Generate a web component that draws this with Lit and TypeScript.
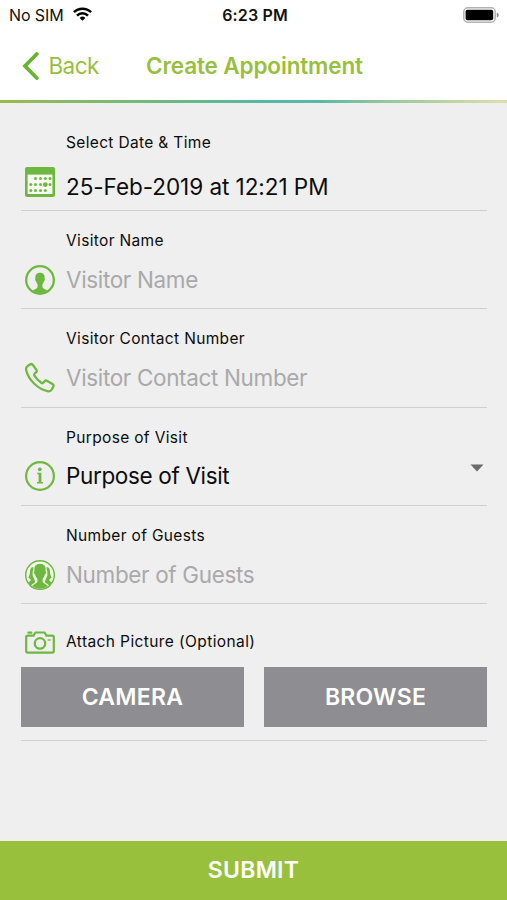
import { LitElement, html, css, svg } from "lit";
import { customElement, property } from "lit/decorators.js";

const icons: Record<string, unknown> = {
  calendar: svg`
    <rect x="0" y="0" width="30" height="30" rx="2" fill="#6fb83f"/>
    <rect x="2.6" y="7.6" width="24.8" height="19.4" fill="#f6faf3"/>
    <g fill="#6fb83f">
      ${[10.5, 15.5, 20.3, 25].map((x) => svg`<circle cx=${x} cy="11.6" r="1.5"/>`)}
      ${[5.8, 10.5, 15.5, 25].map((x) => svg`<circle cx=${x} cy="17.6" r="1.5"/>`)}
      <circle cx="20.3" cy="17.6" r="2.4"/>
      ${[5.8, 10.5, 15.5, 20.3].map((x) => svg`<circle cx=${x} cy="23.6" r="1.5"/>`)}
    </g>`,
  person: svg`
    <circle cx="15" cy="15" r="13.8" fill="none" stroke="#6fb83f" stroke-width="2.3"/>
    <path fill="#6fb83f" d="M15 7.800c-3.400 0-4.900 2.100-4.600 5.400-.7.5-.2 2.600.6 3.100.4 1.300.9 2.200 1.500 2.800v3.300c-1.200 1.500-3.500 1.900-5.300 3.300 2.100 1.900 4.800 2.900 7.800 2.900s5.700-1 7.800-2.900c-1.800-1.400-4.100-1.800-5.300-3.300v-3.300c.6-.6 1.100-1.500 1.500-2.800.8-.5 1.300-2.600.6-3.100.3-3.300-1.200-5.400-4.600-5.400z"/>`,
  phone: svg`
    <path fill="none" stroke="#6fb83f" stroke-width="2.300" stroke-linejoin="round"
      d="M2.300 3.300 5 1.500C6.100.8 7.200 1 7.900 2l3.400 4.600c.7 1 .5 2-.3 2.700L9.700 10.500c-.7.6-.8 1.300-.3 2.100 1.900 2.900 4 5.200 6.900 7.200.9.600 1.600.5 2.200-.2l1.100-1.300c.7-.8 1.700-1 2.700-.4l5.200 3.200c1.100.7 1.400 1.700.8 2.700l-1.700 3c-.7 1.200-1.900 1.700-3.300 1.500C13.200 26.500 3.500 17 1.200 7.200.8 5.500 1.100 4.200 2.300 3.300z"/>`,
  info: svg`
    <circle cx="15" cy="15" r="13.900" fill="none" stroke="#6fb83f" stroke-width="2.200"/>
    <circle cx="14.800" cy="8.300" r="1.900" fill="#6fb83f"/>
    <path fill="#6fb83f" d="M12.200 11.800h4.200v9.300h1.600v1.500h-6v-1.500h1.600v-7.800h-1.400z"/>`,
  group: svg`
    <circle cx="15" cy="15" r="14.300" fill="#f1f7ec" stroke="#6fb83f" stroke-width="1.400"/>
    <g fill="#6fb83f">
      <path d="M9.700 7C6.600 6.500 4.900 8.600 5 11.700c0 2.100-.6 3.700-1.500 5.500.4 1.200 1.800 1.300 2.100 2.200.3 1.100-.6 2.200-2.600 2.900 1.400 2.700 3.600 4.800 6.400 6.100L11 25l-1-4-2.500-6z"/>
      <path d="M20.300 7c3.100-.5 4.800 1.600 4.700 4.700 0 2.100.6 3.700 1.500 5.500-.4 1.200-1.800 1.300-2.100 2.200-.3 1.100.6 2.200 2.600 2.900-1.400 2.700-3.600 4.800-6.400 6.100L19 25l1-4 2.500-6z"/>
      <path stroke="#f1f7ec" stroke-width="1.300" d="M15 3.200c-4.800 0-6.600 2.900-6.200 7.400-1.100.7-.5 3.700.8 4.500.4 1.800 1.100 3.100 2.100 4v2.600c-1.100 1.800-3.900 2.300-5.300 4.200 2.300 2.200 5.200 3.500 8.600 3.500s6.300-1.300 8.600-3.500c-1.400-1.900-4.200-2.400-5.300-4.200v-2.600c1-.9 1.700-2.200 2.100-4 1.300-.8 1.900-3.800.8-4.500.4-4.500-1.400-7.400-6.200-7.400z"/>
    </g>
    <path fill="none" stroke="#6fb83f" stroke-width="1.500" d="M5 25.200a14.300 14.300 0 0 0 20 0"/>`,
  camera: svg`
    <path fill="none" stroke="#6fb83f" stroke-width="2.200" stroke-linejoin="round"
      d="M2.700 4.600h5.800l1.900-3.100h9.200l1.900 3.100h5.800c.9 0 1.500.6 1.500 1.500v14c0 .9-.6 1.500-1.500 1.500H2.700c-.9 0-1.500-.6-1.500-1.500v-14c0-.9.600-1.500 1.500-1.500z"/>
    <rect x="2.400" y=".6" width="5" height="2.200" rx=".8" fill="#6fb83f"/>
    <circle cx="15" cy="12.400" r="5.200" fill="none" stroke="#6fb83f" stroke-width="2.300"/>
    <path stroke="#6fb83f" stroke-width="2" d="M22.600 9h3.200" opacity=".65"/>`,
};

@customElement("form-field")
export class FormField extends LitElement {
  @property() label = "";
  @property() value = "";
  @property() placeholder = "";
  @property() icon = "";
  @property({ type: Boolean }) dropdown = false;

  static styles = css`
    :host {
      display: block;
      box-sizing: border-box;
      height: 98.350px;
      padding-top: 20px;
      border-bottom: 1px solid #cfcfcf;
      color: #0c0c0c;
    }
    .label {
      padding-left: 45px;
      font-size: 15.500px;
      line-height: 20px;
      letter-spacing: 0.34px;
      white-space: nowrap;
    }
    .row {
      display: flex;
      align-items: center;
      height: 34px;
      margin-top: var(--gap, 11.500px);
      padding-left: 4px;
    }
    .icon {
      width: 30px;
      height: 30px;
      overflow: visible;
      flex: none;
      margin-top: var(--icon-shift, 2.300px);
      align-self: flex-start;
    }
    .value {
      flex: 1;
      margin-left: 11px;
      font-size: 22.500px;
      line-height: 34px;
      letter-spacing: var(--value-spacing, -0.350px);
      white-space: nowrap;
    }
    .hint {
      color: #a9a9ab;
    }
    .arrow {
      width: 14px;
      height: 8px;
      margin: 0 3px 16px 0;
    }
  `;

  render() {
    return html`
      <div class="label">${this.label}</div>
      <div class="row">
        <svg class="icon" viewBox="0 0 30 30">${icons[this.icon]}</svg>
        <div class="value ${this.value ? "" : "hint"}">${this.value || this.placeholder}</div>
        ${this.dropdown
          ? html`<svg class="arrow" viewBox="0 0 14 8"><path d="M.5.5h13L7 7.500z" fill="#6b6b6b" /></svg>`
          : null}
      </div>
    `;
  }
}

@customElement("app-root")
export class AppRoot extends LitElement {
  static styles = css`
    :host {
      display: flex;
      flex-direction: column;
      height: 900px;
      background: #efefef;
      font-family: Inter, "Liberation Sans", sans-serif;
      overflow: hidden;
    }
    .status {
      display: grid;
      grid-template-columns: 1fr auto 1fr;
      align-items: center;
      height: 30px;
      padding: 0 8px 0 9px;
      background: #fff;
      color: #111;
      font-size: 16px;
      line-height: 30px;
    }
    .carrier {
      display: flex;
      align-items: center;
      gap: 9px;
      letter-spacing: -0.1px;
    }
    .wifi {
      width: 19px;
      height: 14px;
      margin-top: -2px;
    }
    .time {
      font-weight: 600;
      letter-spacing: 0.15px;
      padding-left: 2px;
    }
    .battery {
      width: 36px;
      height: 16px;
      justify-self: end;
    }
    .nav {
      display: flex;
      align-items: center;
      height: 70px;
      box-sizing: border-box;
      padding: 2px 0 0 22px;
      background: #fff;
      color: #98bf3d;
      font-size: 22.500px;
      line-height: 30px;
      white-space: nowrap;
    }
    .chevron {
      width: 17px;
      height: 28px;
      margin-right: 9.500px;
    }
    .back {
      width: 97.500px;
      letter-spacing: -0.6px;
    }
    .title {
      font-weight: 600;
      letter-spacing: -0.13px;
    }
    .accent {
      height: 3px;
      margin-bottom: 0.5px;
      flex: none;
      background: linear-gradient(90deg, #9bb84a 0%, #86b968 15%, #6cb886 33%, #55b8a2 52%, #58b9a5 63%, #94c79c 76%, #c3d6a4 90%, #dbdfb0 100%);
    }
    .form {
      flex: 1;
      display: flex;
      flex-direction: column;
      padding: 0 20px 0 21px;
    }
    .first {
      height: 107.500px;
      padding-top: 29.500px;
      --gap: 17.300px;
      --icon-shift: -3.500px;
      --value-spacing: -0.050px;
    }
    .attach {
      height: 136.500px;
      box-sizing: border-box;
      border-bottom: 1px solid #cfcfcf;
      padding-top: 25px;
    }
    .caption {
      display: flex;
      align-items: center;
      height: 24px;
      padding-left: 4px;
      gap: 11px;
      font-size: 15.500px;
      letter-spacing: 0.4px;
      color: #0c0c0c;
    }
    .camera {
      width: 30px;
      height: 23px;
      margin-top: 2px;
    }
    .buttons {
      display: grid;
      grid-template-columns: 1fr 1fr;
      gap: 20px;
      margin-top: 14px;
    }
    .button,
    .submit {
      height: 59.500px;
      border: 0;
      padding: 0;
      color: #fff;
      font: 600 23px/59px Inter, sans-serif;
      letter-spacing: 0.25px;
    }
    .button {
      background: #8e8d92;
      padding-top: 1px;
    }
    .submit {
      flex: none;
      background: #99c03c;
    }
  `;

  render() {
    return html`
      <div class="status">
        <div class="carrier">
          <span>No SIM</span>
          <svg class="wifi" viewBox="0 0 19 14">
            <g fill="none" stroke="#000" stroke-width="2.500">
              <path d="M.9 5.200a12.300 12.300 0 0 1 17.200 0" />
              <path d="M4 8.600a7.800 7.800 0 0 1 11 0" />
            </g>
            <path d="M6.600 10.900a4.200 4.200 0 0 1 5.800 0L9.500 13.800z" />
          </svg>
        </div>
        <div class="time">6:23 PM</div>
        <svg class="battery" viewBox="0 0 36 16">
          <rect x=".8" y=".8" width="31.400" height="14.400" rx="4" fill="#fff" stroke="#b2b2b2" stroke-width="1.500" />
          <rect x="2.600" y="2.700" width="27.600" height="10.600" rx="1.800" />
          <path d="M33.800 5.500q2 .8 2 2.500t-2 2.500z" fill="#8a8a8a" />
        </svg>
      </div>
      <div class="nav">
        <svg class="chevron" viewBox="0 0 17 28">
          <path d="M14.800 2 3 14l11.800 12" fill="none" stroke="#69b42e" stroke-width="3.800" stroke-linecap="round" />
        </svg>
        <div class="back">Back</div>
        <div class="title">Create Appointment</div>
      </div>
      <div class="accent"></div>
      <div class="form">
        <form-field class="first" icon="calendar" label="Select Date &amp; Time" value="25-Feb-2019 at 12:21 PM"></form-field>
        <form-field icon="person" label="Visitor Name" placeholder="Visitor Name"></form-field>
        <form-field icon="phone" label="Visitor Contact Number" placeholder="Visitor Contact Number"></form-field>
        <form-field icon="info" label="Purpose of Visit" value="Purpose of Visit" dropdown></form-field>
        <form-field icon="group" label="Number of Guests" placeholder="Number of Guests"></form-field>
        <div class="attach">
          <div class="caption">
            <svg class="camera" viewBox="0 0 30 23">${icons.camera}</svg>
            <span>Attach Picture (Optional)</span>
          </div>
          <div class="buttons">
            <button class="button">CAMERA</button>
            <button class="button">BROWSE</button>
          </div>
        </div>
      </div>
      <button class="submit">SUBMIT</button>
    `;
  }
}
